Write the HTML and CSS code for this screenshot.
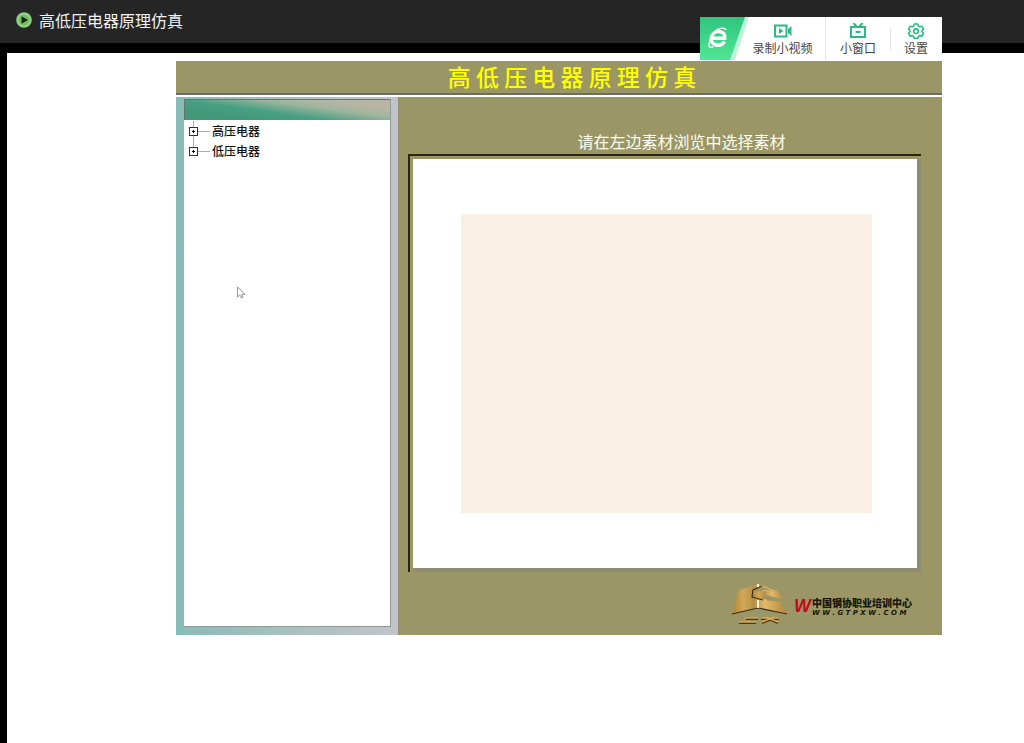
FILE: index.html
```html
<!DOCTYPE html>
<html lang="zh-CN">
<head>
<meta charset="utf-8">
<meta name="viewport" content="width=device-width, initial-scale=1">
<title>高低压电器原理仿真</title>
<link rel="stylesheet" href="styles.css">
</head>
<body>
<header class="topbar">
  <svg class="play" viewBox="0 0 16 16" aria-hidden="true"><circle cx="8" cy="8" r="7.8" fill="#8ed081"/><circle cx="8" cy="8" r="5.2" fill="#76bd68"/><path d="M5.5 4.2v7.6L12 8z" fill="#172617"/></svg>
  <h1 class="topbar-title">高低压电器原理仿真</h1>
</header>

<nav class="tools" aria-label="录制工具">
  <svg class="brand" viewBox="0 0 48 43" aria-hidden="true">
    <defs><linearGradient id="brandFill" x1="0" y1="0" x2="0" y2="1"><stop offset="0" stop-color="#2ec57f"/><stop offset="1" stop-color="#50e693"/></linearGradient></defs>
    <path d="M42 0h7L35 43H28z" fill="#bdf3da"/>
    <path d="M0 0h45L30 43H0z" fill="url(#brandFill)"/>
    <path d="M24.500 24.500C22.500 27.600 20 28.700 16.800 28.200C12.600 27.500 10.500 24.500 11.300 20.600C12.200 16.500 15.800 14 19.700 14.600C23.400 15.200 25.200 17.700 24.800 21.200H13" fill="none" stroke="#fff" stroke-width="3.400"/>
    <path d="M15 14C19 11 24.500 10.200 26 13M10.500 23.500C7.600 28.500 8.500 31.800 13.500 29.600" fill="none" stroke="#fff" stroke-width="1.500"/>
  </svg>
  <button class="tool tool-record" type="button">
    <svg viewBox="0 0 18 16" aria-hidden="true"><path d="M1 2.500h11.500v11H1z" fill="none" stroke="#2abb84" stroke-width="2"/><path d="M14 6l3.500-3v10L14 10z" fill="#2abb84"/><path d="M5 5v6l4.500-3z" fill="#2abb84"/></svg>
    <span>录制小视频</span>
  </button>
  <button class="tool tool-window" type="button">
    <svg viewBox="0 0 18 16" aria-hidden="true"><path d="M2 4h14v10H2zM6.500 9h5M4.500 0L8 4M13.500 0L10 4" fill="none" stroke="#2abb84" stroke-width="2"/></svg>
    <span>小窗口</span>
  </button>
  <button class="tool tool-settings" type="button">
    <svg viewBox="0 0 18 16" aria-hidden="true"><path d="M7.300 1h3.400l.7 2.100 1.300.7 2.200-.5 1.600 2.800L15 7.700v1l1.500 1.600-1.600 2.800-2.200-.5-1.300.8-.7 2H7.300l-.7-2-1.300-.8-2.200.5-1.600-2.800L3 8.700v-1L1.500 6.100l1.600-2.800 2.200.5 1.300-.7z" fill="none" stroke="#2abb84" stroke-width="1.600" stroke-linejoin="round"/><circle cx="9" cy="8.200" r="2.300" fill="none" stroke="#2abb84" stroke-width="1.600"/></svg>
    <span>设置</span>
  </button>
</nav>

<main class="stage">
  <div class="app">
    <h2 class="banner">高 低 压 电 器 原 理 仿 真</h2>
    <div class="columns">
      <aside class="sidebar">
        <div class="tree-panel">
          <div class="tree-head"></div>
          <ul class="tree">
            <li class="node"><button class="toggle" type="button" id="high" aria-labelledby="high-label" aria-expanded="false"></button><span id="high-label">高压电器</span></li>
            <li class="node"><button class="toggle" type="button" id="low" aria-labelledby="low-label" aria-expanded="false"></button><span id="low-label">低压电器</span></li>
          </ul>
          <svg class="cursor" viewBox="0 0 10 13" aria-hidden="true"><path d="M1.500 1v10l2.300-2 1.700 3 1.500-.8-1.400-2.900H9z" fill="#fff" stroke="#777" stroke-width=".8"/></svg>
        </div>
      </aside>
      <section class="viewer">
        <p class="prompt">请在左边素材浏览中选择素材</p>
        <div class="frame"><div class="screen"><div class="slide"></div></div></div>
        <footer class="credit">
          <svg class="emblem" viewBox="0 0 58 42" aria-hidden="true">
            <defs><linearGradient id="gold" x1="0" y1="0" x2="1" y2="0"><stop offset="0" stop-color="#b08438"/><stop offset=".2" stop-color="#d2a856"/><stop offset=".4" stop-color="#b98f48"/><stop offset=".6" stop-color="#e2bb6c"/><stop offset="1" stop-color="#b3853a"/></linearGradient></defs>
            <path d="M27 1L8 7L1 31L27 24L56 31L49 19L36 17L35 12L53 17L46 8z" fill="url(#gold)"/>
            <path d="M22 7L31 4L45 8L32 7L30 10L36 12L36 17L49 19L33 16L20 14z" fill="#9a9666"/>
            <path d="M31 4L46 8L53 17L35 12L31 14L31 17L21 14L22 9L31 8L44 9z" fill="url(#gold)"/>
            <path d="M21 14L22 7L31 3M21 14L32 17M1 31L27 25L56 31" fill="none" stroke="#3d2f16" stroke-width="1.200"/>
            <path d="M35 12L53 17L50 19L36 17z" fill="#9a9666"/>
            <path d="M27 17V25M27 1V4" stroke="#fff5d0" stroke-width="2"/>
            <path d="M8 40H14V36H27M14 40H25M30 36H48M31 40L43 35M35 35L47 40" fill="none" stroke="#4c3818" stroke-width="2"/>
            <path d="M8 39H14V35H27M14 39H25M30 35H48M31 39L43 34M35 34L47 39" fill="none" stroke="#d8a94e" stroke-width="1.600"/>
          </svg>
          <span class="mark">W</span>
          <div class="org"><span class="org-name">中国钢协职业培训中心</span><span class="org-url">W W . G T P X W . C O M</span></div>
        </footer>
      </section>
    </div>
  </div>
</main>
</body>
</html>
```
FILE: styles.css
```css
* { box-sizing: border-box; }
body {
  margin: 0;
  min-height: 100vh;
  display: flex;
  flex-direction: column;
  position: relative;
  background: #fff;
  color: #111;
  font-family: "Noto Sans CJK SC", "Noto Sans", sans-serif;
}
button { border: 0; background: none; font: inherit; color: inherit; }
.topbar {
  display: flex;
  align-items: center;
  gap: 7px;
  padding: 0 16px 4px;
  height: 43px;
  background: #252525;
}
.play { width: 16px; height: 16px; }
.topbar-title { margin: 0; font-size: 16px; line-height: 24px; font-weight: 400; color: #f2f2f2; }

/* Recording toolbar floats over the page corner */
.tools {
  position: absolute;
  top: 17px;
  right: 82px;
  display: flex;
  width: 242px;
  height: 43px;
  background: #fff;
}
.brand { flex: none; width: 48px; height: 43px; }
.tool {
  display: flex;
  flex-direction: column;
  align-items: center;
  padding: 6px 0 0;
  font-size: 12px;
  line-height: 18px;
  color: #444;
  white-space: nowrap;
}
.tool svg { width: 18px; height: 16px; }
.tool-record { flex: none; width: 78px; padding-right: 8px; border-right: 1px solid #d4eae3; }
.tool-window { flex: none; width: 64px; }
.tool-settings {
  flex: 1;
  background: linear-gradient(#e6e6e6, #e6e6e6) left center / 1px 22px no-repeat;
}

.stage {
  flex: 1;
  border: solid #000;
  border-width: 10px 0 0 7px;
  padding: 8px 82px 16px 169px;
}
.app { background: #9a9666; }
.banner {
  margin: 0;
  height: 36px;
  border-bottom: 2px solid #fff;
  box-shadow: inset 0 -2px #6e6b62;
  font-size: 23px;
  line-height: 31px;
  font-weight: 500;
  color: #ff0;
  text-align: center;
  padding-left: 26px;
}
.columns { display: grid; grid-template-columns: 223fr 543fr; }
.sidebar {
  display: flex;
  padding: 2px 7px 8px 8px;
  border-right: 1px solid #918f78;
  background: linear-gradient(90deg, #86bdb8, #a9bfc0 50%, #c1c4cb);
}
.tree-panel {
  flex: 1;
  position: relative;
  background: #fff;
  border: solid #8f9996;
  border-width: 0 1px 1px 0;
}
.tree-head {
  height: 21px;
  border: 1px solid #62786c;
  border-width: 1px 0 0 1px;
  background: linear-gradient(8deg, #43987a 20%, #46a083 40%, #9eb59d 64%, #b8b5a4 80%);
}
.tree {
  margin: 0 0 0 5px;
  padding: 1px 0 0;
  list-style: none;
  font-size: 12px;
  line-height: 20px;
  font-weight: 500;
}
.node {
  display: flex;
  align-items: center;
  gap: 14px;
  background:
    linear-gradient(#aaa, #aaa) 9px 10px / 12px 1px no-repeat,
    linear-gradient(#aaa, #aaa) 4px 0 / 1px 100% no-repeat;
}
.node:last-child {
  background:
    linear-gradient(#aaa, #aaa) 9px 10px / 12px 1px no-repeat,
    linear-gradient(#aaa, #aaa) 4px 0 / 1px 10px no-repeat;
}
.toggle {
  width: 9px;
  height: 9px;
  padding: 0;
  border: 1px solid #333;
  background:
    linear-gradient(#111, #111) center / 3px 1px no-repeat,
    linear-gradient(#111, #111) center / 1px 3px no-repeat,
    #fff;
}
.cursor { position: absolute; left: 52px; top: 187px; width: 10px; height: 13px; }

.viewer { padding: 32px 21px 10px 9px; }
.prompt {
  margin: 0;
  padding: 0 0 1px 34px;
  font-size: 16px;
  line-height: 24px;
  color: #fffff0;
  text-align: center;
}
.frame {
  border: solid #29270f;
  border-width: 2px 0 0 2px;
  padding: 3px 0 0 3px;
}
.screen {
  padding: 55px 45px 55px 48px;
  background: #fff;
  border: solid #8f8c70;
  border-width: 0 4px 4px 0;
}
.slide { min-height: 299px; background: #f9efe4; }
.credit {
  display: flex;
  justify-content: flex-end;
  align-items: center;
  gap: 5px;
  padding: 11px 9px 0 0;
}
.emblem { width: 58px; height: 42px; }
.mark {
  padding-top: 4px;
  font-family: "Liberation Sans", sans-serif;
  font-size: 18px;
  line-height: 20px;
  font-weight: 700;
  font-style: italic;
  color: #c00c18;
}
.org {
  display: flex;
  flex-direction: column;
  gap: 1px;
  margin-left: -4px;
  padding-top: 5px;
  white-space: nowrap;
  color: #16150c;
}
.org-name { font-size: 10px; line-height: 12px; font-weight: 900; }
.org-url {
  font-family: "DejaVu Sans", sans-serif;
  font-size: 7px;
  line-height: 7px;
  font-weight: 700;
  font-style: italic;
}
```
